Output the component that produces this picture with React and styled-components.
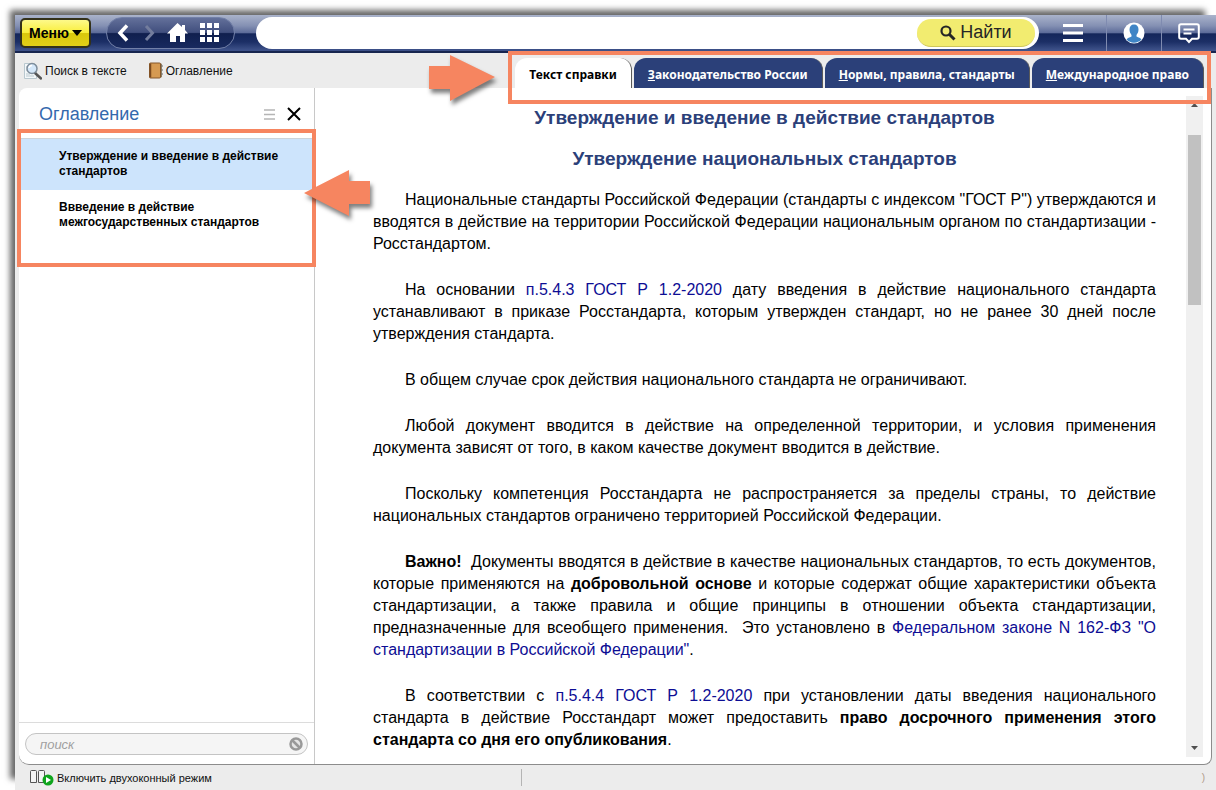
import { useState } from "react"
import styled, { createGlobalStyle } from "styled-components"

const GlobalStyle = createGlobalStyle`
    * { box-sizing: border-box; }
    body {
        margin: 0;
        background: #fff;
        color: #000;
        font-family: "Liberation Sans", Arial, sans-serif;
    }
    button, input { font-family: inherit; }
`

const Page = styled.div`
    display: flex;
    min-height: 100vh;
    padding: 15px 0 0 15px;
    overflow: hidden;
`

const Window = styled.div`
    display: flex;
    flex-direction: column;
    flex: 1;
    min-width: 0;
    background: #ececec;
    box-shadow: -8px -8px 6px -3px rgba(0, 0, 0, 0.6);
`

const Header = styled.header`
    display: flex;
    align-items: center;
    height: 38px;
    padding-left: 5px;
    border-bottom: 2px solid #17254f;
    background: linear-gradient(#aab3cb 0%, #8490b3 30%, #5b6a98 50%, #14265a 52%, #1c2f66 75%, #3d5189 97%);
`

const MenuButton = styled.button`
    display: flex;
    align-items: center;
    gap: 3px;
    height: 30px;
    padding: 0 7px;
    border: 2px solid #33311a;
    border-radius: 5px;
    background: linear-gradient(#fdf98a 0%, #f9ee3c 48%, #d9c70c 52%, #e2cf18 100%);
    font-size: 14px;
    font-weight: bold;
`

const NavPill = styled.nav`
    display: flex;
    align-items: center;
    gap: 10px;
    height: 32px;
    margin-left: 15px;
    padding: 0 14px 0 10px;
    border: 1px solid #7280a8;
    border-radius: 16px;
    background: linear-gradient(#63709a 0%, #414f7e 48%, #101f4e 52%, #182a5f 100%);
`

const IconButton = styled.button`
    display: flex;
    padding: 0;
    border: none;
    background: none;
    cursor: pointer;
`

const SearchForm = styled.form`
    display: flex;
    align-items: center;
    flex: 1;
    height: 32px;
    margin-left: 21px;
    padding: 2px 4px 2px 16px;
    border-radius: 16px;
    background: #fff;
`

const SearchInput = styled.input`
    flex: 1;
    min-width: 0;
    border: none;
    outline: none;
    background: none;
    font-size: 16px;
`

const FindButton = styled.button`
    display: flex;
    align-items: center;
    justify-content: center;
    gap: 4px;
    width: 118px;
    height: 28px;
    border: none;
    border-bottom: 1px solid #cfc65a;
    border-radius: 14px;
    background: #f2ec70;
    color: #262626;
    font-size: 18px;
`

const HeaderCell = styled.div`
    display: flex;
    align-items: center;
    justify-content: center;
    width: ${props => props.$wide ? "67px" : "55px"};
    height: 36px;
    border-left: ${props => props.$wide ? "none" : "1px solid #7f8bb0"};
`

const Toolbar = styled.div`
    display: flex;
    justify-content: space-between;
    height: 35px;
    padding: 0 12px 0 9px;
`

const Tools = styled.div`
    display: flex;
    align-items: center;
    gap: 22px;
`

const ToolButton = styled.button`
    display: flex;
    align-items: center;
    gap: 3px;
    padding: 0;
    border: none;
    background: none;
    color: #111;
    font-size: ${props => props.$small ? "11px" : "12px"};
    white-space: nowrap;
`

const Tabs = styled.nav`
    position: relative;
    display: flex;
    align-items: flex-end;
    gap: 2px;
`

const Tab = styled.a`
    height: 30px;
    padding: 0 14px;
    border-right: 1px solid #5a5a5a;
    border-radius: 12px 12px 0 0;
    background: ${props => props.$active ? "#fff" : "#2b4079"};
    color: ${props => props.$active ? "#000" : "#fff"};
    font-family: "Noto Sans", "Open Sans", sans-serif;
    font-size: 12px;
    font-weight: bold;
    line-height: 33px;
    text-decoration: none;
    white-space: nowrap;

    &::first-letter {
        text-decoration: ${props => props.$active ? "none" : "underline"};
    }
`

const Highlight = styled.div`
    position: absolute;
    z-index: 2;
    inset: ${props => props.$inset};
    border: 4px solid #f68560;
    pointer-events: none;
`

const ArrowBox = styled.div`
    position: absolute;
    z-index: 3;
    top: ${props => props.$top};
    ${props => props.$side}: ${props => props.$shift};
    filter: drop-shadow(2px 4px 2px rgba(0, 0, 0, 0.5));
    pointer-events: none;

    svg { display: block; }
`

const Content = styled.div`
    display: flex;
    flex: 1;
    margin: 0 4px;
    border-right: 1px solid #8c8c8c;
    border-bottom: 1px solid #8c8c8c;
    border-radius: 8px 0 8px 10px;
    background: #fff;
`

const Sidebar = styled.aside`
    display: flex;
    flex-direction: column;
    width: 296px;
    border-right: 1px solid #c8c8c8;
`

const SidebarHead = styled.div`
    display: flex;
    align-items: center;
    gap: 12px;
    height: 50px;
    padding: 2px 13px 0 20px;
`

const SidebarTitle = styled.h2`
    flex: 1;
    margin: 0;
    color: #3469ad;
    font-size: 18px;
    font-weight: normal;
`

const ContentsBox = styled.div`
    position: relative;
    flex: 1;
    border-top: 1px solid #ccd3da;
`

const ContentsLink = styled.a`
    display: block;
    padding: 10px 30px 11px 40px;
    background: ${props => props.$active ? "#cde4fc" : "transparent"};
    color: #000;
    font-size: 12px;
    font-weight: bold;
    line-height: 15px;
    text-decoration: none;
`

const FilterBox = styled.div`
    padding: 10px 6px 9px;
    border-top: 1px solid #dcdcdc;
`

const FilterField = styled.label`
    display: flex;
    align-items: center;
    height: 22px;
    padding: 0 4px 0 14px;
    border: 1px solid #c4c4c4;
    border-radius: 11px;
    background: #f5f5f5;

    input {
        flex: 1;
        min-width: 0;
        padding: 0;
        border: none;
        outline: none;
        background: none;
        font-size: 13px;
        font-style: italic;
    }
    input::placeholder { color: #a0a0a0; }
`

const Main = styled.main`
    display: flex;
    flex: 1;
    min-width: 0;
    padding: 8px 8px 7px 58px;
`

const Article = styled.article`
    flex: 1;
    min-width: 0;
    padding-right: 30px;
    font-size: 16px;
    line-height: 22px;
    text-align: justify;

    h1 {
        margin: 10px 0 17px;
        color: #2b4079;
        font-size: 19px;
        line-height: 24px;
        text-align: center;
    }
    p {
        margin: 0 0 24px;
        text-indent: 32px;
    }
    h1 + p { margin-top: 18px; }
    p:last-child { margin-bottom: 0; }
    a {
        color: #0d0d94;
        text-decoration: none;
    }
`

const ScrollTrack = styled.div`
    display: flex;
    flex-direction: column;
    align-items: center;
    width: 17px;
    background: #f0f0f0;
`

const ScrollThumb = styled.div`
    width: 13px;
    height: 170px;
    margin-top: 22px;
    margin-bottom: auto;
    background: #c1c1c1;
`

const ScrollArrow = styled.svg`
    width: 17px;
    height: 17px;
`

const StatusBar = styled.footer`
    display: flex;
    align-items: center;
    height: 25px;
    padding: 0 11px 0 15px;
`

const StatusLeft = styled.div`
    width: 492px;
    border-right: 1px solid #b4b4b4;
`

const StatusMark = styled.span`
    margin-left: auto;
    color: #b09a88;
    font-size: 10px;
`

const Arrow = ({ left }) => (
    <svg width="66" height="46" viewBox="0 0 66 46" aria-hidden="true">
        <path fill="#f68560" d={left ? "M0 23 45 0v11h21v23H45v12z" : "M66 22 21 0v11H0v23h21v12z"} />
    </svg>
)

const MagnifierIcon = () => (
    <svg width="18" height="18" viewBox="0 0 18 18">
        <path d="M.5 1.500h10l2 2v13H.5z" fill="#f4f8fa" stroke="#b9c8cf" />
        <path d="M2 5h3M2 8h2M2 12h4M2 14h8" stroke="#b9c8cf" />
        <path d="m11 11 6 5.500" stroke="#555" strokeWidth="2.500" strokeLinecap="round" />
        <circle cx="8" cy="6.500" r="5" fill="#d5e8fa" stroke="#7e8d9b" strokeWidth="1.500" />
        <path d="M5 6a3 3 0 0 1 3-2.500" fill="none" stroke="#fff" strokeWidth="1.500" />
    </svg>
)

const BookIcon = () => (
    <svg width="14" height="17" viewBox="0 0 14 17">
        <path d="M3 2h9.500v13H3z" fill="#eee6d5" stroke="#8d8069" />
        <rect x=".5" y="1" width="11" height="15" rx="1" fill="#d69a52" stroke="#85572a" />
        <path d="M1.500 1.500v14" stroke="#7c4a1f" strokeWidth="1.500" />
        <path d="M12.500 4H14M12.500 8H14M12.500 12H14" stroke="#666" />
    </svg>
)

const sections = [
    "Утверждение и введение в действие стандартов",
    "Ввведение в действие межгосударственных стандартов",
]

const tabs = ["Текст справки", "Законодательство России", "Нормы, правила, стандарты", "Международное право"]

const TopBar = function() {
    return (
        <Header>
            <MenuButton type="button">
                Меню
                <svg width="10" height="6" viewBox="0 0 10 6"><path d="M0 0h10L5 6z" /></svg>
            </MenuButton>
            <NavPill>
                <IconButton aria-label="Назад">
                    <svg width="12" height="20" viewBox="0 0 12 20">
                        <path d="m10 2.500-7 7.500 7 7.500" fill="none" stroke="#fff" strokeWidth="3.500" />
                    </svg>
                </IconButton>
                <IconButton aria-label="Вперёд">
                    <svg width="18" height="20" viewBox="0 0 18 20">
                        <path d="m7 3 6.500 7L7 17" fill="none" stroke="#737d9d" strokeWidth="3" />
                    </svg>
                </IconButton>
                <IconButton aria-label="Домой">
                    <svg width="23" height="20" viewBox="0 0 23 20">
                        <path d="M10.500 0 0 10.500h3V19h6v-6h4v6h5v-8.500h3L18 7V2h-3v2z" fill="#fff" />
                    </svg>
                </IconButton>
                <IconButton aria-label="Сервисы">
                    <svg width="20" height="20" viewBox="0 0 20 20">
                        <path d="M0 0h5v5H0zM7 0h5v5H7zM14 0h5v5h-5zM0 7h5v5H0zM7 7h5v5H7zM14 7h5v5h-5zM0 14h5v5H0zM7 14h5v5H7zM14 14h5v5h-5z" fill="#fff" />
                    </svg>
                </IconButton>
            </NavPill>
            <SearchForm onSubmit={e => e.preventDefault()}>
                <SearchInput type="text" aria-label="Поиск" />
                <FindButton type="submit">
                    <svg width="16" height="16" viewBox="0 0 16 16">
                        <circle cx="6" cy="6" r="4.500" fill="none" stroke="#262626" strokeWidth="2.200" />
                        <path d="m9.500 9.500 5 5" stroke="#262626" strokeWidth="3" />
                    </svg>
                    Найти
                </FindButton>
            </SearchForm>
            <HeaderCell $wide>
                <IconButton aria-label="Список">
                    <svg width="20" height="18" viewBox="0 0 20 18">
                        <path d="M0 1.500h20M0 9h20M0 16.500h20" stroke="#fff" strokeWidth="3" />
                    </svg>
                </IconButton>
            </HeaderCell>
            <HeaderCell>
                <IconButton aria-label="Профиль">
                    <svg width="22" height="22" viewBox="0 0 22 22">
                        <circle cx="11" cy="11" r="10.500" fill="#fff" />
                        <path d="M11 2.500c3 0 4.500 2 4.500 5 0 2.500-1 4-2 5.500v1.500c2 1 4 1.300 5 3a10.500 10.500 0 0 1-15 0c1-1.700 3-2 5-3V13c-1-1.500-2-3-2-5.500 0-3 1.500-5 4.500-5z" fill="#3f85c6" />
                    </svg>
                </IconButton>
            </HeaderCell>
            <HeaderCell>
                <IconButton aria-label="Сообщения">
                    <svg width="22" height="21" viewBox="0 0 22 21">
                        <path d="M3 1.200h16q1.800 0 1.800 1.800v11q0 1.800-1.800 1.800h-5L11 19l-3-3.200H3q-1.800 0-1.800-1.800V3q0-1.800 1.800-1.800z" fill="none" stroke="#fff" strokeWidth="2" />
                        <path d="M5.500 6.500h11M5.500 10.500h8" stroke="#fff" strokeWidth="2" />
                    </svg>
                </IconButton>
            </HeaderCell>
        </Header>
    )
}

const DocumentText = function() {
    return (
        <Article>
            <h1>Утверждение и введение в действие стандартов</h1>
            <h1>Утверждение национальных стандартов</h1>
            <p>
                Национальные стандарты Российской Федерации (стандарты с индексом "ГОСТ Р") утверждаются и
                вводятся в действие на территории Российской Федерации национальным органом по стандартизации -
                Росстандартом.
            </p>
            <p>
                На основании <a href="#p543">п.5.4.3 ГОСТ Р 1.2-2020</a> дату введения в действие национального
                стандарта устанавливают в приказе Росстандарта, которым утвержден стандарт, но не ранее 30 дней
                после утверждения стандарта.
            </p>
            <p>В общем случае срок действия национального стандарта не ограничивают.</p>
            <p>
                Любой документ вводится в действие на определенной территории, и условия применения
                документа зависят от того, в каком качестве документ вводится в действие.
            </p>
            <p>
                Поскольку компетенция Росстандарта не распространяется за пределы страны, то действие
                национальных стандартов ограничено территорией Российской Федерации.
            </p>
            <p>
                <b>Важно!</b>&nbsp; Документы вводятся в действие в качестве национальных стандартов, то есть
                документов, которые применяются на <b>добровольной основе</b> и которые содержат общие
                характеристики объекта стандартизации, а также правила и общие принципы в отношении объекта
                стандартизации, предназначенные для всеобщего применения.&nbsp; Это установлено
                в <a href="#fz162">Федеральном законе N 162-ФЗ "О стандартизации в Российской Федерации"</a>.
            </p>
            <p>
                В соответствии с <a href="#p544">п.5.4.4 ГОСТ Р 1.2-2020</a> при установлении даты введения
                национального стандарта в действие Росстандарт может предоставить <b>право досрочного
                применения этого стандарта со дня его опубликования</b>.
            </p>
        </Article>
    )
}

export default function App() {
    let [tab, setTab] = useState(0)
    let [section, setSection] = useState(0)

    return (
        <Page>
            <GlobalStyle />
            <Window>
                <TopBar />
                <Toolbar>
                    <Tools>
                        <ToolButton type="button"><MagnifierIcon />Поиск в тексте</ToolButton>
                        <ToolButton type="button"><BookIcon />Оглавление</ToolButton>
                    </Tools>
                    <Tabs>
                        {tabs.map((name, i) => (
                            <Tab key={name} href={"#tab" + i} $active={i === tab} onClick={() => setTab(i)}>{name}</Tab>
                        ))}
                        <Highlight $inset="-2px -7px -16px -7px" />
                        <ArrowBox $top="2px" $side="right" $shift="calc(100% + 20px)"><Arrow /></ArrowBox>
                    </Tabs>
                </Toolbar>
                <Content>
                    <Sidebar>
                        <SidebarHead>
                            <SidebarTitle>Оглавление</SidebarTitle>
                            <IconButton aria-label="Вид списка">
                                <svg width="11" height="11" viewBox="0 0 11 11">
                                    <path d="M0 1h11M0 5.500h11M0 10h11" stroke="#b5b5b5" strokeWidth="1.500" />
                                </svg>
                            </IconButton>
                            <IconButton aria-label="Закрыть">
                                <svg width="14" height="14" viewBox="0 0 14 14">
                                    <path d="m1 1 12 12M13 1 1 13" stroke="#000" strokeWidth="2" />
                                </svg>
                            </IconButton>
                        </SidebarHead>
                        <ContentsBox>
                            {sections.map((name, i) => (
                                <ContentsLink key={name} href={"#section" + i} $active={i === section} onClick={() => setSection(i)}>
                                    {name}
                                </ContentsLink>
                            ))}
                            <Highlight $inset="-10px -2px auto -2px" style={{ height: sections.length * 69 }} />
                            <ArrowBox $top="31px" $side="left" $shift="calc(100% - 10px)"><Arrow left /></ArrowBox>
                        </ContentsBox>
                        <FilterBox>
                            <FilterField>
                                <input type="text" placeholder="поиск" aria-label="поиск" />
                                <svg width="14" height="14" viewBox="0 0 14 14">
                                    <circle cx="7" cy="7" r="5.500" fill="#e4e4e4" stroke="#999" strokeWidth="2.500" />
                                    <path d="m3 3 8 8" stroke="#999" strokeWidth="2.500" />
                                </svg>
                            </FilterField>
                        </FilterBox>
                    </Sidebar>
                    <Main>
                        <DocumentText />
                        <ScrollTrack aria-hidden="true">
                            <ScrollArrow viewBox="0 0 17 17"><path d="M5 11h7L8.500 7z" fill="#505050" /></ScrollArrow>
                            <ScrollThumb />
                            <ScrollArrow viewBox="0 0 17 17"><path d="M5 6h7l-3.500 4z" fill="#505050" /></ScrollArrow>
                        </ScrollTrack>
                    </Main>
                </Content>
                <StatusBar>
                    <StatusLeft>
                        <ToolButton type="button" $small>
                            <svg width="24" height="17" viewBox="0 0 24 17">
                                <path d="M.5 2.500q0-1 1-1h4q1 0 1 1v11h-6zM8.500 2.500q0-1 1-1h4q1 0 1 1v11h-6z" fill="#f4f4f4" stroke="#555" />
                                <circle cx="18" cy="11" r="5.500" fill="#0fa41c" />
                                <path d="M16 8v6l5-3z" fill="#fff" />
                            </svg>
                            Включить двухоконный режим
                        </ToolButton>
                    </StatusLeft>
                    <StatusMark>)</StatusMark>
                </StatusBar>
            </Window>
        </Page>
    )
}
